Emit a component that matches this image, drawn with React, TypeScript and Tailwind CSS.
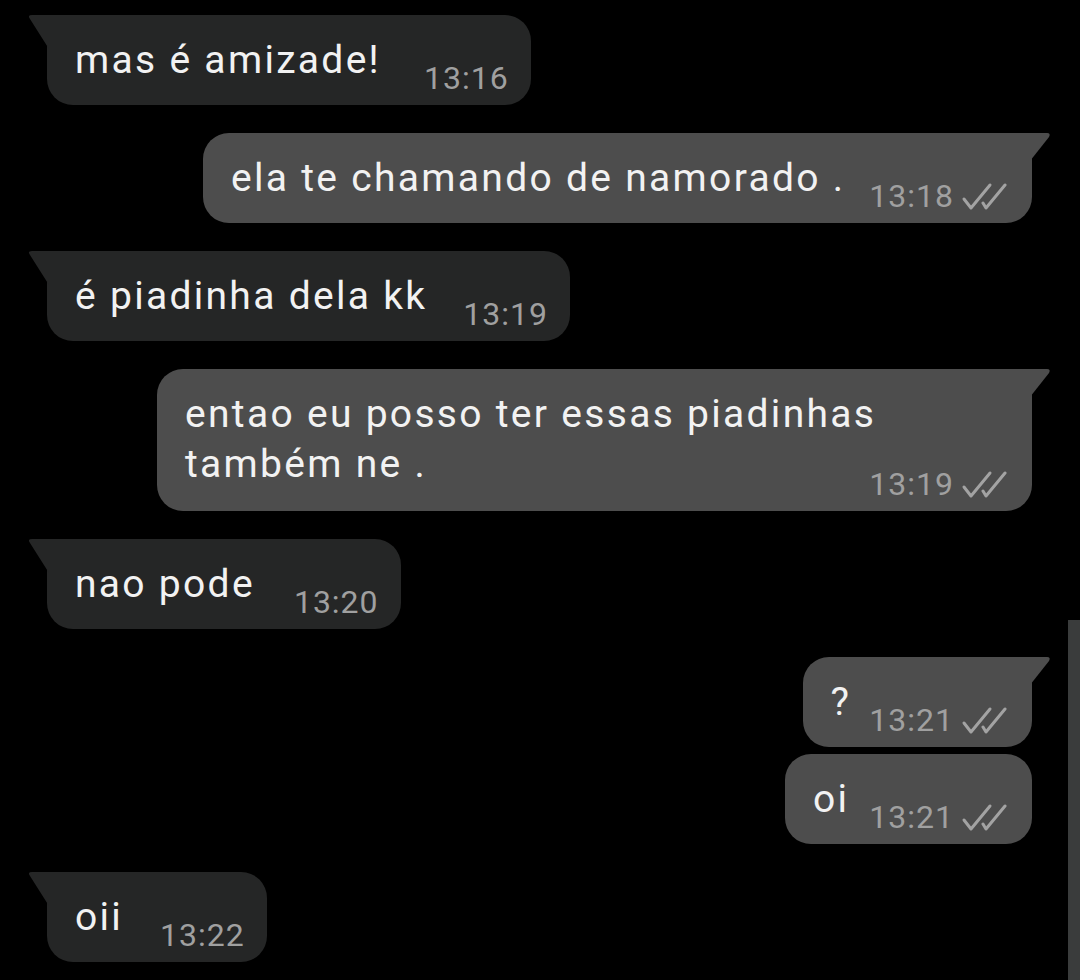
import React from "react";

type Msg = {
  out: boolean;
  text: string;
  time: string;
  gap: number;
  tail?: boolean;
  wrap?: boolean;
};

const MESSAGES: Msg[] = [
  { out: false, text: "mas é amizade!", time: "13:16", gap: 43, tail: true },
  { out: true, text: "ela te chamando de namorado .", time: "13:18", gap: 24, tail: true },
  { out: false, text: "é piadinha dela kk", time: "13:19", gap: 36, tail: true },
  {
    out: true,
    text: "entao eu posso ter essas piadinhas também ne .",
    time: "13:19",
    gap: 0,
    tail: true,
    wrap: true,
  },
  { out: false, text: "nao pode", time: "13:20", gap: 39, tail: true },
  { out: true, text: "?", time: "13:21", gap: 18, tail: true },
  { out: true, text: "oi", time: "13:21", gap: 20, tail: false },
  { out: false, text: "oii", time: "13:22", gap: 37, tail: true },
];

function DoubleCheck() {
  return (
    <svg width="46" height="30" viewBox="0 0 46 30" fill="none" className="shrink-0">
      <path d="M3 17 L10 26 L29 3" stroke="#a3a3a3" strokeWidth="3" strokeLinecap="round" strokeLinejoin="round" />
      <path d="M22 21 L25 26 L44 3" stroke="#a3a3a3" strokeWidth="3" strokeLinecap="round" strokeLinejoin="round" />
    </svg>
  );
}

function Tail({ out }: { out: boolean }) {
  if (out) {
    return (
      <svg
        width="22"
        height="30"
        viewBox="0 0 22 30"
        className="absolute -right-[20px] top-0"
      >
        <path d="M0 0 H17 Q21 0 19 4 L0 28 Z" fill="#4d4d4d" />
      </svg>
    );
  }
  return (
    <svg
      width="22"
      height="36"
      viewBox="0 0 22 36"
      className="absolute -left-[20px] top-0"
    >
      <path d="M22 0 H5 Q0 0 3 4 L22 34 Z" fill="#252626" />
    </svg>
  );
}

function Bubble({ m }: { m: Msg }) {
  const bg = m.out ? "bg-[#4d4d4d]" : "bg-[#252626]";
  const corner = m.tail
    ? m.out
      ? "rounded-tr-none"
      : "rounded-tl-none"
    : "";
  const time = (
    <div className="flex shrink-0 items-center gap-[7px] text-[32px] leading-[31px] tracking-[1px] text-[#a0a0a0]">
      <span>{m.time}</span>
      {m.out && <DoubleCheck />}
    </div>
  );

  return (
    <div
      className={`relative rounded-[26px] ${bg} ${corner} pl-[28px] ${
        m.out ? "pr-[25px]" : "pr-[22px]"
      } pt-[20px] pb-[11px]`}
    >
      {m.tail && <Tail out={m.out} />}
      {m.wrap ? (
        <div className="flex flex-col">
          <span className="w-[822px] text-[39px] leading-[50px] tracking-[2.3px] text-[#f2f2f2]">
            {m.text}
          </span>
          <div className="-mt-[20px] self-end">{time}</div>
        </div>
      ) : (
        <div className="flex items-end" style={{ gap: m.gap }}>
          <span className="mb-[9px] whitespace-nowrap text-[39px] leading-[50px] tracking-[2.3px] text-[#f2f2f2]">
            {m.text}
          </span>
          {time}
        </div>
      )}
    </div>
  );
}

export default function App() {
  return (
    <div
      className="relative h-[980px] w-[1080px] overflow-hidden bg-black"
      style={{ fontFamily: "Roboto, 'Liberation Sans', sans-serif" }}
    >
      <div className="flex flex-col pt-[15px] pl-[47px] pr-[48px]">
        {MESSAGES.map((m, i) => {
          const prev = MESSAGES[i - 1];
          const grouped = prev && prev.out === m.out;
          return (
            <div
              key={i}
              className={`flex ${m.out ? "justify-end" : "justify-start"} ${
                i === 0 ? "" : grouped ? "mt-[7px]" : "mt-[28px]"
              }`}
            >
              <Bubble m={m} />
            </div>
          );
        })}
      </div>
      {/* scrollbar thumb */}
      <div className="absolute right-0 top-[620px] h-[360px] w-[12px] bg-[#3a3c3c]" />
    </div>
  );
}
